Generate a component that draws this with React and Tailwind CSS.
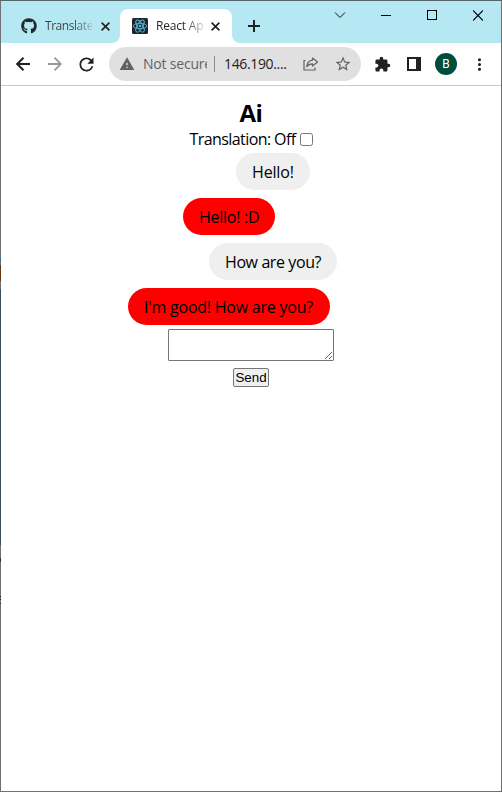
import React from "react";
import { FaGithub } from "react-icons/fa";
import { MdWarning, MdExtension, MdMoreVert, MdStarBorder, MdRefresh } from "react-icons/md";

function ReactMark() {
  return (
    <svg className="h-4 w-4 shrink-0" viewBox="0 0 16 16">
      <rect width="16" height="16" rx="1.5" fill="#20232a" />
      <g fill="none" stroke="#53b9d6" strokeWidth="0.9">
        <ellipse cx="8" cy="8" rx="6.8" ry="2.7" />
        <ellipse cx="8" cy="8" rx="6.8" ry="2.7" transform="rotate(60 8 8)" />
        <ellipse cx="8" cy="8" rx="6.8" ry="2.7" transform="rotate(120 8 8)" />
      </g>
      <circle cx="8" cy="8" r="1.3" fill="#53b9d6" />
    </svg>
  );
}

function TabClose() {
  return (
    <svg className="h-[9px] w-[9px] shrink-0" viewBox="0 0 9 9" fill="none" stroke="#202124" strokeWidth="1.6">
      <path d="M.6 .6L8.4 8.4M8.4 .6L.6 8.4" />
    </svg>
  );
}

function TitleBar() {
  return (
    <div className="flex h-[42px] bg-[#b5e8f2]">
      <div className="flex w-[119px] items-end bg-white">
        <div className="flex h-[42px] w-full items-center rounded-br-[8px] bg-[#b5e8f2] pt-2 pl-5">
          <FaGithub className="h-4 w-4 shrink-0 text-[#24292f]" />
          <span className="ml-2 w-[47px] bg-linear-to-r from-[#3c4043] from-60% to-[#9fc9d2] bg-clip-text text-[12px] leading-4 tracking-[-0.45px] whitespace-nowrap text-transparent">Translate</span>
          <span className="ml-[9px] flex"><TabClose /></span>
        </div>
      </div>
      <div className="flex w-[112px] items-end bg-[#b5e8f2]">
        <div className="flex h-[34px] w-full items-center rounded-t-[8px] bg-white pl-3">
          <ReactMark />
          <span className="ml-2 w-[47px] bg-linear-to-r from-[#202124] from-55% to-[#d0d0d0] bg-clip-text text-[12px] leading-4 tracking-[-0.2px] whitespace-nowrap text-transparent">React Ap</span>
          <span className="ml-2 flex"><TabClose /></span>
        </div>
      </div>
      <div className="flex flex-1 bg-white">
        <div className="flex flex-1 items-start rounded-bl-[8px] bg-[#b5e8f2]">
          <svg className="mt-[19px] ml-4 h-3 w-3" viewBox="0 0 12 12" stroke="#202124" strokeWidth="2">
            <path d="M6 0V12M0 6H12" />
          </svg>
          <svg className="mt-[10px] ml-[74px] h-[8px] w-[12px]" viewBox="0 0 12 8" fill="none" stroke="#111" strokeWidth="1">
            <path d="M1 1.5L6 6.5L11 1.5" />
          </svg>
          <svg className="mt-[9px] ml-[35px] h-[11px] w-[10px]" viewBox="0 0 10 11" stroke="#000">
            <path d="M0 5.5H10" />
          </svg>
          <svg className="mt-[9px] ml-9 h-[10px] w-[10px]" viewBox="0 0 10 10" fill="none" stroke="#000">
            <rect x=".5" y=".5" width="9" height="9" />
          </svg>
          <svg className="mt-[9px] ml-9 h-[11px] w-[10px]" viewBox="0 0 10 11" fill="none" stroke="#000" strokeWidth="1.1">
            <path d="M0 .5L10 10.5M10 .5L0 10.5" />
          </svg>
        </div>
      </div>
    </div>
  );
}

function Toolbar() {
  return (
    <div className="flex h-[43px] items-center border-b border-[#cbcbcb] bg-white text-[#202124]">
      <svg className="ml-[15px] h-[14px] w-[14px] shrink-0" viewBox="0 0 14 14" fill="none" stroke="#202124" strokeWidth="2">
        <path d="M14 7H1.5M7.5 .7L1.2 7L7.5 13.3" />
      </svg>
      <svg className="ml-[18px] h-[14px] w-[14px] shrink-0" viewBox="0 0 14 14" fill="none" stroke="#96989a" strokeWidth="1.8">
        <path d="M0 7H12.5M6.5 .7L12.8 7L6.5 13.3" />
      </svg>
      <MdRefresh className="ml-[14px] h-[21px] w-[21px] shrink-0" />
      <div className="ml-3 flex h-[34px] w-[252px] shrink-0 items-center rounded-full bg-[#e0e0e0] text-[#5f6368]">
        <MdWarning className="ml-[10px] h-4 w-4 shrink-0" />
        <span className="ml-2 w-[64px] shrink-0 overflow-hidden text-[14px] leading-5 tracking-[-0.2px] whitespace-nowrap">Not secure</span>
        <span className="ml-[7px] h-4 w-px shrink-0 bg-[#8b8d90]" />
        <span className="ml-[9px] w-[63px] shrink-0 text-[14px] leading-5 tracking-[-0.35px] whitespace-nowrap text-[#202124]">146.190....</span>
        <svg className="ml-4 h-[14px] w-4 shrink-0" viewBox="0 0 16 14" fill="none" stroke="#5f6368" strokeWidth="1.2">
          <path d="M2.5 3.5H1V13H12V10.5" />
          <path d="M9.5 1L14.6 5L9.5 9V6.8C6.5 6.8 5 7.8 3.8 9.8C4.2 6 6.2 3.5 9.5 3.2Z" strokeLinejoin="round" />
        </svg>
        <MdStarBorder className="ml-[15px] h-[18px] w-[18px] shrink-0" />
      </div>
      <MdExtension className="ml-[13px] h-[17px] w-[17px] shrink-0" />
      <svg className="ml-4 h-[14px] w-[14px] shrink-0" viewBox="0 0 14 14">
        <path d="M0 0H14V14H0ZM2 2V12H9V2Z" fill="#202124" fillRule="evenodd" />
      </svg>
      <span className="ml-[14px] flex h-[22px] w-[22px] shrink-0 items-center justify-center rounded-full bg-[#004d40] font-['Roboto',sans-serif] text-[12px] leading-none text-white">B</span>
      <MdMoreVert className="ml-[13px] h-[19px] w-[19px] shrink-0" />
    </div>
  );
}

function WindowEdge() {
  return (
    <div className="flex w-px shrink-0 flex-col bg-[#707070]">
      <span className="mt-[257px] h-1 bg-[#3d6a98]" />
      <span className="mt-[3px] h-4 bg-[#6b3410]" />
      <span className="mt-2 h-[256px] bg-[#36505d]" />
      <span className="mt-[13px] h-1 bg-[#402c2c]" />
      <span className="mt-[34px] h-px bg-[#222]" />
      <span className="mt-[2px] h-px bg-[#222]" />
      <span className="mt-[3px] h-px bg-[#222]" />
    </div>
  );
}

export default function App() {
  return (
    <div className="flex h-[792px] w-[502px] flex-col overflow-hidden border-y border-t-[#56676b] border-b-[#707070] bg-white font-['Open_Sans',sans-serif]">
      <div className="flex min-h-0 flex-1">
        <WindowEdge />
        <div className="flex w-[500px] flex-col">
          <TitleBar />
          <Toolbar />
          <main className="flex flex-col items-center text-[16px] leading-[21px] text-black">
            <h1 className="mt-[11px] text-[24px] leading-8 font-bold tracking-[-0.4px]">Ai</h1>
            <label className="flex items-center whitespace-nowrap">
              <span className="w-[106px] tracking-[-0.58px]">Translation: Off</span>
              <input type="checkbox" className="ml-1 h-[13px] w-[13px]" />
            </label>
            <div className="mt-[3px] flex w-[246px] flex-col gap-2 whitespace-nowrap">
              <p className="ml-[108px] h-[37px] w-[74px] rounded-full bg-[#efefef] pt-[9px] pl-4 tracking-[-0.15px]">Hello!</p>
              <p className="ml-[55px] h-[37px] w-[92px] rounded-full bg-[#ff0000] pt-[9px] pl-4 tracking-[-0.25px]">Hello! :D</p>
              <p className="ml-[81px] h-[37px] w-[128px] rounded-full bg-[#efefef] pt-[9px] pl-4 tracking-[-0.4px]">How are you?</p>
              <p className="h-[37px] w-[202px] rounded-full bg-[#ff0000] pt-[9px] pl-4 tracking-[-0.23px]">I'm good! How are you?</p>
            </div>
            <textarea className="mt-1 block h-8 w-[166px] rounded-[1px] border border-[#767676] bg-white p-[2px]" />
            <button className="mt-[7px] h-[19px] w-9 rounded-[2px] border border-[#767676] bg-[#efefef] font-['Liberation_Sans',Arial,sans-serif] text-[13.333px] leading-[17px]">Send</button>
          </main>
        </div>
        <div className="w-px bg-[#707070]" />
      </div>
    </div>
  );
}
